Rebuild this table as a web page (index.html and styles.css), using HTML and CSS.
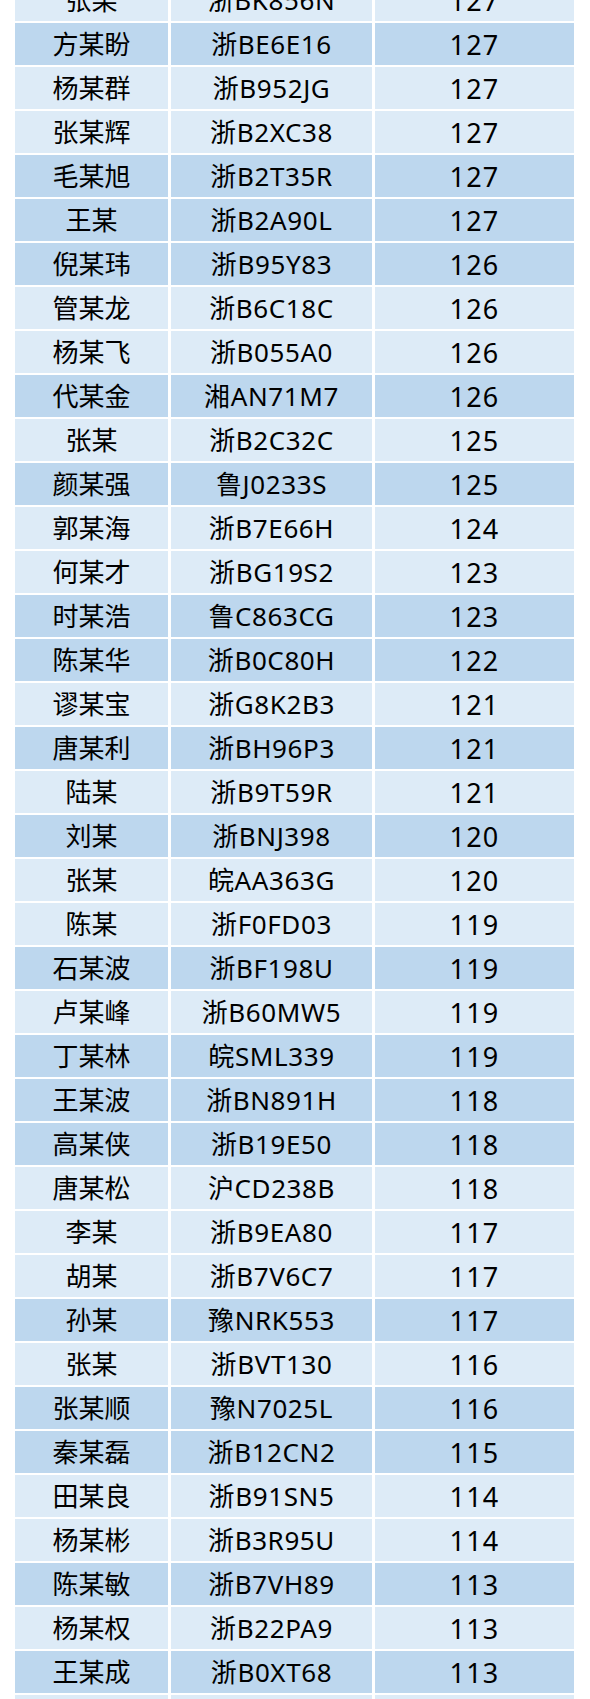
FILE: index.html
```html
<!DOCTYPE html>
<html lang="zh-CN">
<head>
<meta charset="utf-8">
<title>排行</title>
<link rel="stylesheet" href="styles.css">
</head>
<body>
<div class="table">
  <div class="row l"><div>张某</div><div>浙BK856N</div><div>127</div></div>
  <div class="row d"><div>方某盼</div><div>浙BE6E16</div><div>127</div></div>
  <div class="row l"><div>杨某群</div><div>浙B952JG</div><div>127</div></div>
  <div class="row l"><div>张某辉</div><div>浙B2XC38</div><div>127</div></div>
  <div class="row d"><div>毛某旭</div><div>浙B2T35R</div><div>127</div></div>
  <div class="row d"><div>王某</div><div>浙B2A90L</div><div>127</div></div>
  <div class="row d"><div>倪某玮</div><div>浙B95Y83</div><div>126</div></div>
  <div class="row l"><div>管某龙</div><div>浙B6C18C</div><div>126</div></div>
  <div class="row l"><div>杨某飞</div><div>浙B055A0</div><div>126</div></div>
  <div class="row d"><div>代某金</div><div>湘AN71M7</div><div>126</div></div>
  <div class="row l"><div>张某</div><div>浙B2C32C</div><div>125</div></div>
  <div class="row d"><div>颜某强</div><div>鲁J0233S</div><div>125</div></div>
  <div class="row l"><div>郭某海</div><div>浙B7E66H</div><div>124</div></div>
  <div class="row l"><div>何某才</div><div>浙BG19S2</div><div>123</div></div>
  <div class="row d"><div>时某浩</div><div>鲁C863CG</div><div>123</div></div>
  <div class="row d"><div>陈某华</div><div>浙B0C80H</div><div>122</div></div>
  <div class="row l"><div>谬某宝</div><div>浙G8K2B3</div><div>121</div></div>
  <div class="row d"><div>唐某利</div><div>浙BH96P3</div><div>121</div></div>
  <div class="row l"><div>陆某</div><div>浙B9T59R</div><div>121</div></div>
  <div class="row d"><div>刘某</div><div>浙BNJ398</div><div>120</div></div>
  <div class="row l"><div>张某</div><div>皖AA363G</div><div>120</div></div>
  <div class="row l"><div>陈某</div><div>浙F0FD03</div><div>119</div></div>
  <div class="row d"><div>石某波</div><div>浙BF198U</div><div>119</div></div>
  <div class="row l"><div>卢某峰</div><div>浙B60MW5</div><div>119</div></div>
  <div class="row d"><div>丁某林</div><div>皖SML339</div><div>119</div></div>
  <div class="row d"><div>王某波</div><div>浙BN891H</div><div>118</div></div>
  <div class="row d"><div>高某侠</div><div>浙B19E50</div><div>118</div></div>
  <div class="row l"><div>唐某松</div><div>沪CD238B</div><div>118</div></div>
  <div class="row l"><div>李某</div><div>浙B9EA80</div><div>117</div></div>
  <div class="row l"><div>胡某</div><div>浙B7V6C7</div><div>117</div></div>
  <div class="row d"><div>孙某</div><div>豫NRK553</div><div>117</div></div>
  <div class="row l"><div>张某</div><div>浙BVT130</div><div>116</div></div>
  <div class="row d"><div>张某顺</div><div>豫N7025L</div><div>116</div></div>
  <div class="row d"><div>秦某磊</div><div>浙B12CN2</div><div>115</div></div>
  <div class="row l"><div>田某良</div><div>浙B91SN5</div><div>114</div></div>
  <div class="row l"><div>杨某彬</div><div>浙B3R95U</div><div>114</div></div>
  <div class="row d"><div>陈某敏</div><div>浙B7VH89</div><div>113</div></div>
  <div class="row l"><div>杨某权</div><div>浙B22PA9</div><div>113</div></div>
  <div class="row d"><div>王某成</div><div>浙B0XT68</div><div>113</div></div>
  <div class="row l"><div></div><div></div><div></div></div>
</div>
</body>
</html>
```

FILE: styles.css
```css
html, body {
  margin: 0;
  padding: 0;
  background: #ffffff;
}

body {
  font-family: "Noto Sans", "Noto Sans CJK SC", sans-serif;
  color: #000000;
  overflow: hidden;
  height: 1699px;
}

.table {
  display: flex;
  flex-direction: column;
  row-gap: 2px;
  margin-top: -21px;
  margin-left: 15px;
  width: 559px;
}

.row {
  display: grid;
  grid-template-columns: 153px 201px 199px;
  column-gap: 3px;
  height: 42px;
}

.row > div {
  display: flex;
  align-items: center;
  justify-content: center;
  font-size: 26px;
  line-height: 1;
}

.row > div:nth-child(2) {
  letter-spacing: 0.6px;
}

.row > div:nth-child(3) {
  font-size: 27px;
  letter-spacing: 1.2px;
}

.row.d > div {
  background: #bdd7ee;
}

.row.l > div {
  background: #ddebf7;
}
```
